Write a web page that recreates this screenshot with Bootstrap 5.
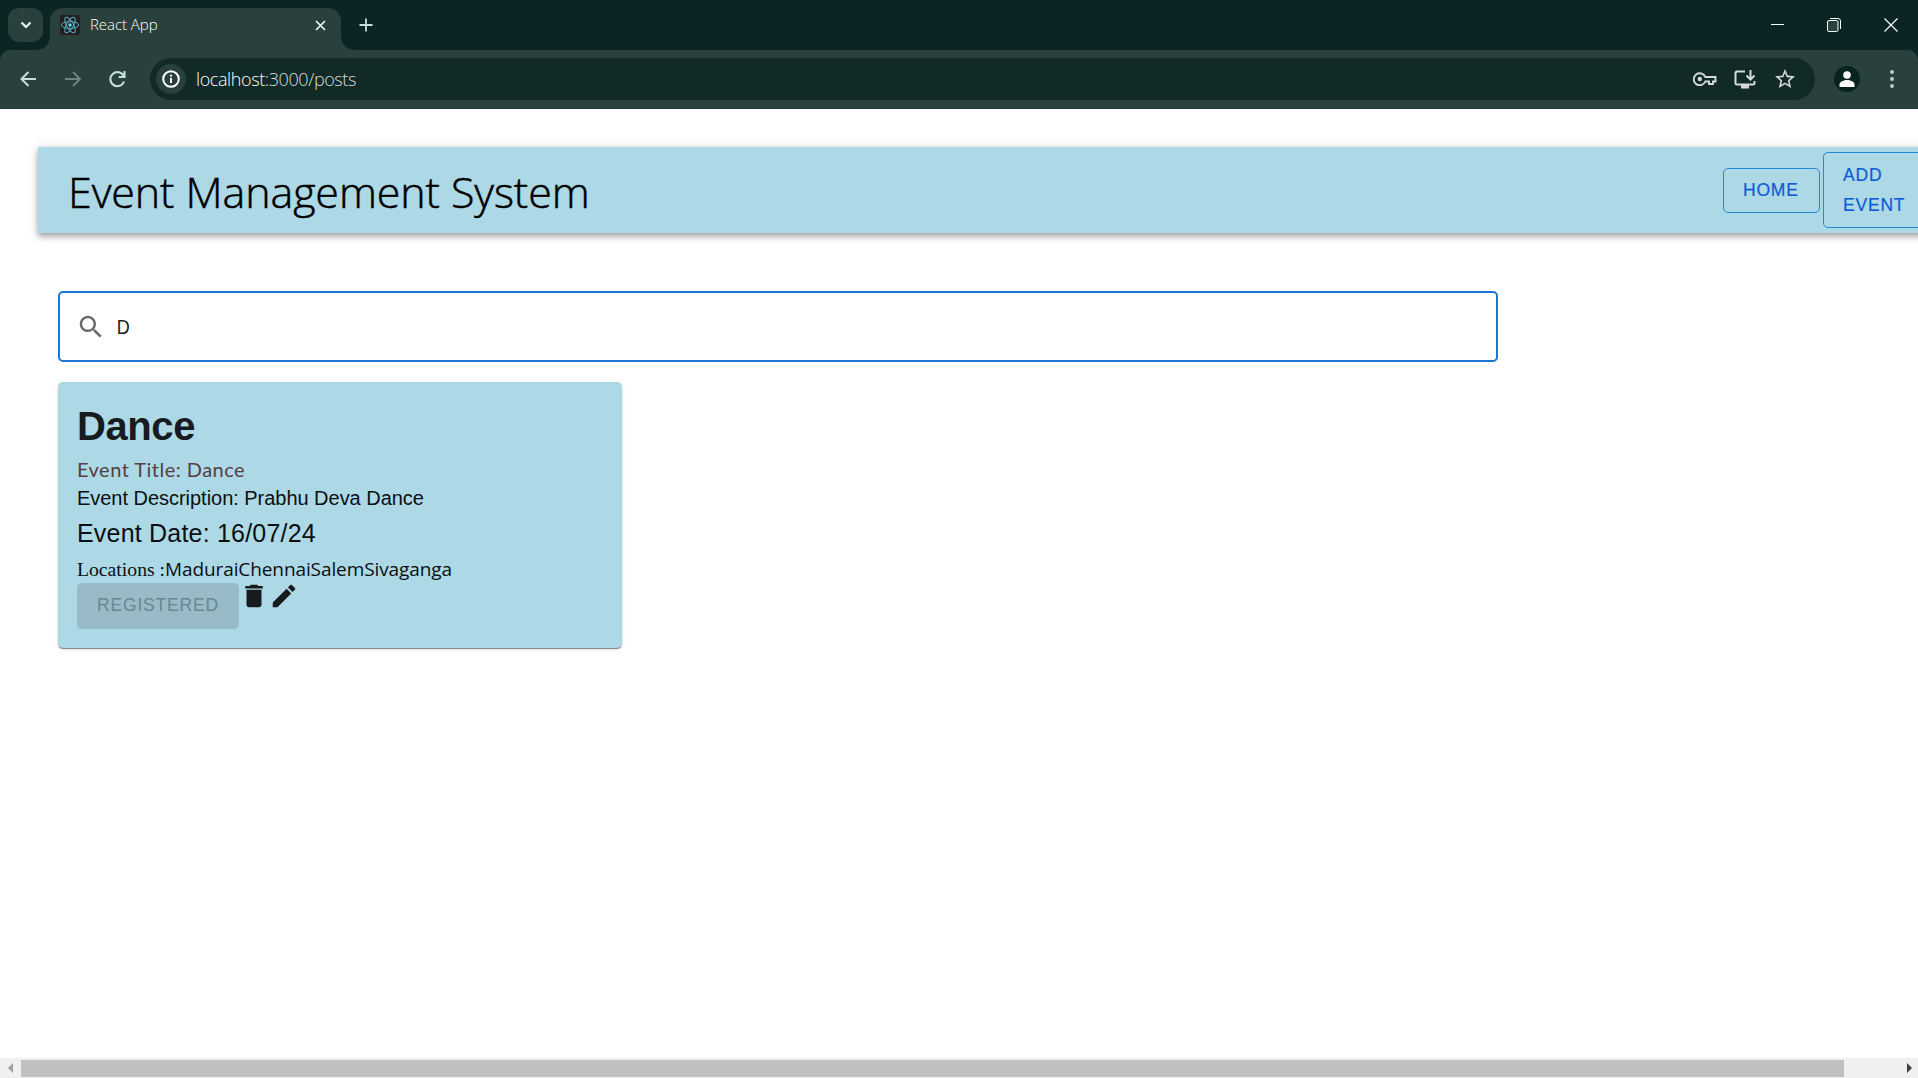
<!DOCTYPE html>
<html lang="en">
<head>
<meta charset="utf-8">
<title>React App</title>
<meta name="viewport" content="width=device-width, initial-scale=1">
<link rel="stylesheet" href="https://cdn.jsdelivr.net/npm/bootstrap@5.3.0/dist/css/bootstrap.min.css">
<style>
html, body { height: 100%; overflow: hidden; }
body { font-family: "Liberation Sans", Arial, sans-serif; background: #fff; }
svg { display: block; flex: none; }
.segoe { font-family: "Open Sans", "Noto Sans", sans-serif; }
.window { width: 1918px; height: 1078px; overflow: hidden; }
/* browser chrome */
.strip { height: 50px; background: #0b2524; padding-left: 8px; }
.tab-search { width: 35px; height: 34px; margin-top: 8px; border-radius: 11px; background: #29403d; }
.tab-active { position: relative; width: 291px; height: 42px; margin: 8px 0 0 7px; padding: 0 15px 8px 10px; background: #29403d; border-radius: 13px 13px 0 0; }
.tab-active::before, .tab-active::after { content: ""; position: absolute; bottom: 0; width: 13px; height: 13px; }
.tab-active::before { left: -13px; background: radial-gradient(circle at 0 0, transparent 12.5px, #29403d 13px); }
.tab-active::after { right: -13px; background: radial-gradient(circle at 100% 0, transparent 12.5px, #29403d 13px); }
.tab-name { font-size: 15px; font-weight: 300; color: #fff; margin-left: 10px; line-height: 20px; letter-spacing: -.05px; padding-bottom: 2px; }
.tab-plus { margin: 18px 0 0 18px; height: 14px; }
.win-buttons { gap: 43px; padding: 0 20px 0 0; height: 49px; }
.strip-base { background: #0b2524; }
.toolbar { height: 59px; background: #29403d; border-bottom: 1px solid #1f3936; border-radius: 10px 10px 0 0; padding: 0 24px 0 19px; }
.icon-forward { margin: 0 25px 0 23px; }
.omnibox { width: 1665px; height: 42px; border-radius: 21px; background: #112a27; margin-left: 24px; padding: 0 19px 0 6px; }
.site-info { width: 30px; height: 30px; border-radius: 50%; background: #29403d; }
.address { font-size: 18px; font-weight: 300; color: #fff; margin-left: 10px; line-height: 24px; letter-spacing: -.4px; }
.address span { color: #d8dddb; }
.icon-install { margin: 0 18px 0 17px; }
.avatar { width: 26px; height: 26px; border-radius: 50%; background: #082220; margin-left: 19px; }
/* page */
.page-area { height: 949px; overflow: hidden; padding-top: 38px; }
.app-bar { width: 1960px; height: 86px; margin-left: 38px; padding-left: 30px; background: #add8e6; box-shadow: 0 2px 5px rgba(0,0,0,.2), 0 5px 6px rgba(0,0,0,.14), 0 1px 12px rgba(0,0,0,.12); }
.brand-title { width: 1655px; font-size: 43px; font-weight: 300; line-height: 60px; color: #000; letter-spacing: -.1px; padding-top: 3px; white-space: nowrap; -webkit-text-stroke: .5px #000; }
.btn-mui { font-size: 17.5px; line-height: 30px; letter-spacing: .8px; padding: 6px 19px; border-radius: 5px; color: #0b5cd6; border: 1px solid #2487da; text-align: left; -webkit-text-stroke: .2px #0b5cd6; }
.btn-home { width: 97px; height: 45px; padding-right: 0; }
.btn-add { width: 116px; height: 76px; margin-left: 3px; }
.search-box { width: 1440px; height: 71px; margin: 58px 0 0 58px; border: 2px solid #1976d2; border-radius: 5px; padding: 0 16px; }
.search-value { font-size: 20px; line-height: 24px; color: #212121; margin-left: 10px; transform: scaleX(.9); }
.event-card { width: 564px; height: 266px; margin: 20px 0 0 58px; padding: 20px 19px; border: 0; border-radius: 5px; background: #add8e6; color: #0a0f11; box-shadow: 0 2px 1px -1px rgba(0,0,0,.3), 0 1px 1px rgba(0,0,0,.2), 0 1px 4px rgba(0,0,0,.12); white-space: nowrap; }
.event-name { font-size: 40px; line-height: 48px; font-weight: 700; color: #171b1d; margin: 0; letter-spacing: -.4px; }
.event-title { font-family: "Comic Sans MS", Lato, sans-serif; font-size: 20px; line-height: 28px; color: #54403f; margin-top: 5px; letter-spacing: .48px; }
.event-desc { font-size: 20px; line-height: 28px; letter-spacing: -.03px; padding: 1px 0 0 0; }
.event-date { font-size: 25px; line-height: 40px; letter-spacing: .2px; padding-top: 1px; }
.event-loc { font-family: "Liberation Serif", serif; font-size: 19.7px; line-height: 32px; }
.event-loc .segoe { font-size: 19px; letter-spacing: -.1px; }
.event-actions { margin-top: -4px; }
.btn-registered, .btn-registered:disabled { width: 162px; height: 46px; margin-top: 2px; padding: 5px 0 7px; background: #99bbc7; color: #6a8790; opacity: 1; font-size: 17.5px; line-height: 30px; letter-spacing: .8px; border-radius: 5px; }
/* scrollbar */
.h-scroll { height: 20px; background: #f0f0f0; padding-left: 8px; }
.h-thumb { width: 1823px; height: 17px; background: #c0c0c0; margin: 0 63px 0 8px; }
</style>
<script src="https://cdn.jsdelivr.net/npm/bootstrap@5.3.0/dist/js/bootstrap.bundle.min.js"></script>
</head>
<body>
<div class="window d-flex flex-column">
  <header class="strip d-flex flex-shrink-0">
    <div class="tab-search d-flex align-items-center justify-content-center">
      <svg width="12" height="8" viewBox="0 0 12 8"><path d="M1.5 1.5 6 6l4.500-4.500" fill="none" stroke="#eef5f3" stroke-width="2.200"/></svg>
    </div>
    <div class="tab-active d-flex align-items-center">
      <svg width="20" height="20" viewBox="0 0 20 20"><rect width="20" height="20" rx="2" fill="#23201f"/><g fill="none" stroke="#53a9c0" stroke-width="1"><ellipse cx="10" cy="10" rx="8.700" ry="3.400"/><ellipse cx="10" cy="10" rx="8.700" ry="3.400" transform="rotate(60 10 10)"/><ellipse cx="10" cy="10" rx="8.700" ry="3.400" transform="rotate(120 10 10)"/></g><circle cx="10" cy="10" r="1.700" fill="#61dafb"/></svg>
      <span class="tab-name segoe flex-grow-1">React App</span>
      <svg width="11" height="11" viewBox="0 0 11 11"><path d="m1 1 9 9M10 1l-9 9" stroke="#eef5f3" stroke-width="1.700"/></svg>
    </div>
    <svg class="tab-plus" width="14" height="14" viewBox="0 0 14 14"><path d="M7 .5v13M.5 7h13" stroke="#c5e0da" stroke-width="1.800"/></svg>
    <div class="win-buttons d-flex align-items-center ms-auto">
      <svg width="14" height="14" viewBox="0 0 14 14"><path d="M1 6.500h13" stroke="#fff"/></svg>
      <svg width="14" height="14" viewBox="0 0 14 14"><path d="M3 .5h8a2.500 2.500 0 0 1 2.500 2.500v8" fill="none" stroke="#fff"/><rect x=".5" y="2.500" width="10.500" height="11" rx="1.500" fill="#29403d" stroke="#fff"/></svg>
      <svg width="14" height="14" viewBox="0 0 14 14"><path d="m.5.5 13 13M13.500.5l-13 13" stroke="#fff" stroke-width="1.200"/></svg>
    </div>
  </header>
  <div class="strip-base flex-shrink-0">
  <nav class="toolbar d-flex align-items-center">
    <svg width="18" height="18" viewBox="0 0 18 18"><path d="M17 9H3M9.500 2 2.500 9l7 7" fill="none" stroke="#c5e0da" stroke-width="2"/></svg>
    <svg class="icon-forward" width="24" height="18" viewBox="-5 0 24 18"><path d="M0 9h14M8 2l7 7-7 7" fill="none" stroke="#6f8481" stroke-width="1.800"/></svg>
    <svg width="17" height="18" viewBox="0 0 17 18"><path d="M14.800 6.300A7 7 0 1 0 15 11.500M15.500 1v6H9.700" fill="none" stroke="#c5e0da" stroke-width="2.100"/></svg>
    <div class="omnibox d-flex align-items-center">
      <div class="site-info d-flex align-items-center justify-content-center"><svg width="18" height="18" viewBox="0 0 18 18"><circle cx="9" cy="9" r="7.800" fill="none" stroke="#fff" stroke-width="2"/><path d="M9 8v5M9 4.800v2" stroke="#fff" stroke-width="1.900"/></svg></div>
      <div class="address segoe me-auto">localhost<span>:3000/posts</span></div>
      <svg width="24" height="14" viewBox="0 0 24 14"><path d="M12.300 5H22.500v4.500H20V12h-4V9.500h-3.700A6 6 0 1 1 12.300 5Z" fill="none" stroke="#d3dad8" stroke-width="1.900"/><circle cx="6.800" cy="7" r="2.200" fill="#d3dad8"/></svg>
      <svg class="icon-install" width="22" height="19" viewBox="0 0 22 19"><path d="M11 1.500H3Q1.500 1.500 1.500 3v10q0 1.500 1.500 1.500h16q1.500 0 1.500-1.500v-2" fill="none" stroke="#d3dad8" stroke-width="2"/><path d="M7 15h8v3.500H7z" fill="#d3dad8"/><path d="M16.500 0v9M12.500 5.500l4 4 4-4" fill="none" stroke="#d3dad8" stroke-width="2"/></svg>
      <svg width="22" height="22" viewBox="1 1 22 22"><path d="m22 9.240-7.190-.62L12 2 9.190 8.630 2 9.240l5.460 4.730L5.820 21 12 17.270 18.180 21l-1.630-7.030L22 9.240zM12 15.400l-3.760 2.270 1-4.280-3.320-2.880 4.380-.38L12 6.100l1.710 4.040 4.380.38-3.320 2.880 1 4.280L12 15.400z" fill="#d3dad8"/></svg>
    </div>
    <div class="avatar d-flex align-items-center justify-content-center"><svg width="16" height="16" viewBox="0 0 16 16"><circle cx="8" cy="4" r="3.800" fill="#fff"/><path d="M.5 16v-2.500C.5 10.500 5 9 8 9s7.500 1.500 7.500 4.500V16z" fill="#fff"/></svg></div>
    <svg class="ms-auto" width="4" height="18" viewBox="0 0 4 18"><g fill="#b5d9d0"><circle cx="2" cy="2" r="1.900"/><circle cx="2" cy="9" r="1.900"/><circle cx="2" cy="16" r="1.900"/></g></svg>
  </nav>
  </div>
  <main class="page-area flex-shrink-0">
    <div class="app-bar d-flex align-items-center">
      <div class="brand-title segoe flex-shrink-0">Event Management System</div>
      <button class="btn btn-mui btn-home flex-shrink-0">HOME</button>
      <button class="btn btn-mui btn-add flex-shrink-0">ADD<br>EVENT</button>
    </div>
    <div class="search-box d-flex align-items-center">
      <svg width="30" height="30" viewBox="0 0 24 24"><path fill="#6b6b6b" d="M15.500 14h-.79l-.28-.27C15.410 12.590 16 11.110 16 9.500 16 5.910 13.090 3 9.500 3S3 5.910 3 9.500 5.910 16 9.500 16c1.610 0 3.090-.59 4.230-1.570l.27.28v.79l5 4.990L20.490 19l-4.990-5zm-6 0C7.010 14 5 11.990 5 9.500S7.010 5 9.500 5 14 7.010 14 9.500 11.990 14 9.500 14z"/></svg>
      <span class="search-value">D</span>
    </div>
    <article class="card event-card">
      <h2 class="event-name">Dance</h2>
      <div class="event-title">Event Title: Dance</div>
      <div class="event-desc">Event Description: Prabhu Deva Dance</div>
      <div class="event-date">Event Date: 16/07/24</div>
      <div class="event-loc">Locations :<span class="segoe">MaduraiChennaiSalemSivaganga</span></div>
      <div class="event-actions d-flex align-items-start">
        <button class="btn btn-registered border-0" disabled>REGISTERED</button>
        <svg width="30" height="30" viewBox="0 0 24 24"><path fill="#171b1d" d="M6 19c0 1.100.9 2 2 2h8c1.100 0 2-.9 2-2V7H6v12zM19 4h-3.500l-1-1h-5l-1 1H5v2h14V4z"/></svg>
        <svg width="30" height="30" viewBox="0 0 24 24"><path fill="#171b1d" d="M3 17.250V21h3.750L17.810 9.940l-3.750-3.750L3 17.250zM20.710 7.040c.39-.39.39-1.020 0-1.410l-2.340-2.340c-.39-.39-1.020-.39-1.410 0l-1.830 1.830 3.750 3.750 1.830-1.830z"/></svg>
      </div>
    </article>
  </main>
  <footer class="h-scroll d-flex align-items-center flex-shrink-0">
    <svg width="5" height="10" viewBox="0 0 5 10"><path d="M5 0v10L0 5z" fill="#a0a0a0"/></svg>
    <div class="h-thumb"></div>
    <svg width="5" height="10" viewBox="0 0 5 10"><path d="M0 0v10l5-5z" fill="#404040"/></svg>
  </footer>
</div>
</body>
</html>
